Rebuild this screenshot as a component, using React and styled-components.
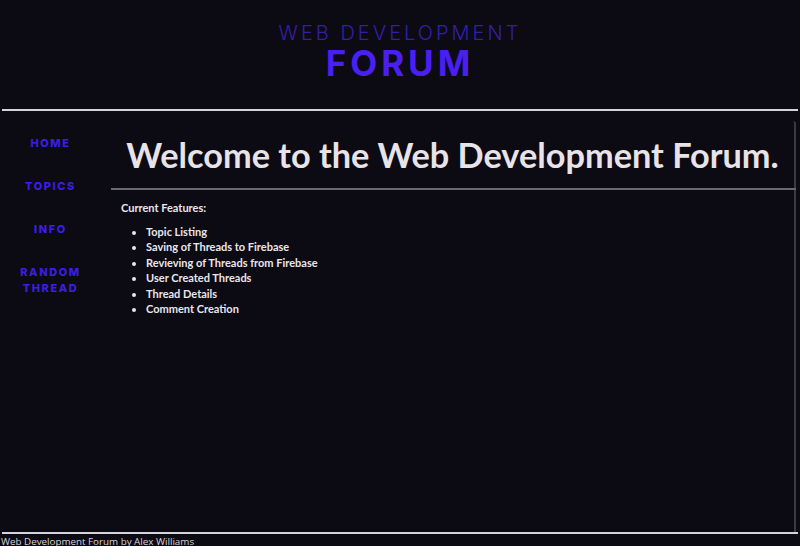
import React from "react";
import styled, { createGlobalStyle } from "styled-components";

const GlobalStyle = createGlobalStyle`
  html, body {
    margin: 0;
    padding: 0;
    background: #0c0a13;
  }
`;

const Page = styled.div`
  width: 800px;
  height: 546px;
  overflow: hidden;
  display: flex;
  flex-direction: column;
  background: #0c0a13;
`;

const Header = styled.header`
  height: 109px;
  display: flex;
  flex-direction: column;
  align-items: center;
  padding-top: 21px;
  box-sizing: border-box;
  font-family: Inter, "DejaVu Sans", sans-serif;
`;

const SiteKicker = styled.div`
  font-size: 20px;
  font-weight: 300;
  letter-spacing: 3px;
  color: #3420a6;
  line-height: 24px;
`;

const SiteTitle = styled.div`
  font-size: 35px;
  font-weight: 700;
  letter-spacing: 4px;
  color: #4a20f2;
  line-height: 36px;
`;

const Rule = styled.div`
  height: 2px;
  margin: 0 2px;
  background: #d6d2de;
`;

const Body = styled.div`
  flex: 1;
  display: flex;
  min-height: 0;
`;

const Sidebar = styled.nav`
  width: 101px;
  flex-shrink: 0;
  display: flex;
  flex-direction: column;
  align-items: center;
  gap: 27px;
  padding-top: 24px;
  margin-right: 10px;
`;

const NavLink = styled.a`
  font-family: Inter, "DejaVu Sans", sans-serif;
  font-size: 11px;
  font-weight: 800;
  letter-spacing: 1.6px;
  line-height: 16px;
  color: #3b1fe2;
  text-align: center;
  text-decoration: none;
  cursor: pointer;
`;

const Main = styled.main`
  flex: 1;
  margin-top: 10px;
  margin-right: 4px;
  border-right: 2px solid #3c3944;
  border-top-right-radius: 3px;
  font-family: Lato, "Open Sans", sans-serif;
  color: #e8e6ec;
`;

const Heading = styled.h1`
  margin: 0;
  padding-top: 13px;
  height: 67px;
  box-sizing: border-box;
  text-align: center;
  font-size: 34.3px;
  font-weight: 700;
  line-height: 42px;
  color: #e7e3e7;
`;

const HeadingRule = styled.div`
  height: 2px;
  background: #6a6672;
  margin-right: -2px;
`;

const Content = styled.div`
  padding: 10px 10px;
  font-size: 11px;
  font-weight: 700;
  line-height: 15.5px;
`;

const Intro = styled.p`
  margin: 0 0 8px;
`;

const Features = styled.ul`
  margin: 0;
  padding-left: 25px;
`;

const Footer = styled.footer`
  height: 12px;
  font-family: "Open Sans", "Liberation Sans", sans-serif;
  font-size: 9.8px;
  line-height: 16px;
  color: #d4d2d8;
  padding-left: 1px;
  white-space: nowrap;
`;

const features = [
  "Topic Listing",
  "Saving of Threads to Firebase",
  "Revieving of Threads from Firebase",
  "User Created Threads",
  "Thread Details",
  "Comment Creation",
];

const App = () => {
  return (
    <Page>
      <GlobalStyle />
      <Header>
        <SiteKicker>WEB DEVELOPMENT</SiteKicker>
        <SiteTitle>FORUM</SiteTitle>
      </Header>
      <Rule />
      <Body>
        <Sidebar>
          <NavLink>HOME</NavLink>
          <NavLink>TOPICS</NavLink>
          <NavLink>INFO</NavLink>
          <NavLink>
            RANDOM
            <br />
            THREAD
          </NavLink>
        </Sidebar>
        <Main>
          <Heading>Welcome to the Web Development Forum.</Heading>
          <HeadingRule />
          <Content>
            <Intro>Current Features:</Intro>
            <Features>
              {features.map((f) => (
                <li key={f}>{f}</li>
              ))}
            </Features>
          </Content>
        </Main>
      </Body>
      <Rule />
      <Footer>Web Development Forum by Alex Williams</Footer>
    </Page>
  );
};

export default App;
